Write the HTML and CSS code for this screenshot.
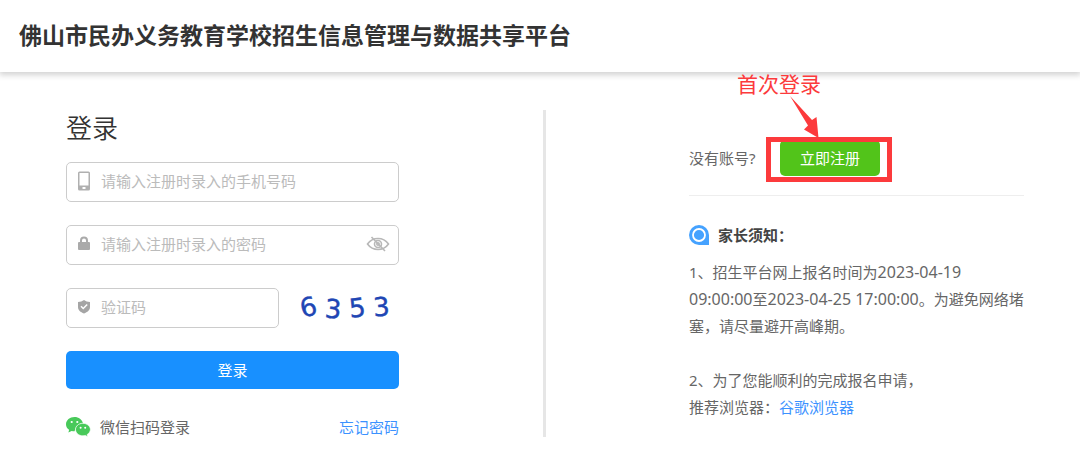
FILE: index.html
```html
<!DOCTYPE html>
<html lang="zh-CN">
<head>
<meta charset="utf-8">
<meta name="viewport" content="width=device-width, initial-scale=1">
<title>佛山市民办义务教育学校招生信息管理与数据共享平台</title>
<link rel="stylesheet" href="styles.css">
</head>
<body>
<header class="site-header">
  <h1 class="site-title">佛山市民办义务教育学校招生信息管理与数据共享平台</h1>
</header>
<main class="columns">
  <section class="login">
    <form class="login-form">
      <h2 class="login-title">登录</h2>
      <label class="field">
        <svg class="field-icon" viewBox="0 0 14 20" aria-hidden="true"><path fill="#b0b0b0" fill-rule="evenodd" d="M2.500 .5h9a1.500 1.500 0 0 1 1.500 1.500v16a1.500 1.500 0 0 1-1.500 1.500h-9A1.500 1.500 0 0 1 1 18V2A1.500 1.500 0 0 1 2.500.5zM2.500 2v12.500h9V2zM5.500 16v2h3v-2z"/></svg>
        <input class="field-input" type="tel" aria-label="手机号码" placeholder="请输入注册时录入的手机号码">
      </label>
      <label class="field">
        <svg class="field-icon" viewBox="0 0 14 20" aria-hidden="true"><rect x="1" y="8" width="12" height="8" rx="1" fill="#aaa"/><path d="M4 8.500V6.500a3 3 0 0 1 6 0v2" fill="none" stroke="#aaa" stroke-width="2"/></svg>
        <input class="field-input" type="password" aria-label="密码" placeholder="请输入注册时录入的密码">
        <button class="eye" type="button" aria-label="显示密码">
          <svg viewBox="0 0 24 16" width="24" height="16" fill="none" stroke="#b8b8b8" stroke-width="1.600"><path d="M1.500 8C4 4.500 7.500 2.500 12 2.500S20 4.500 22.500 8C20 11.500 16.500 13.500 12 13.500S4 11.500 1.500 8z"/><circle cx="12" cy="8" r="3.500"/><circle cx="12" cy="8" r="1.200"/><path d="M5.500 1L19 15"/></svg>
        </button>
      </label>
      <div class="code-row">
        <label class="field code-field">
          <svg class="field-icon" viewBox="0 0 14 20" aria-hidden="true"><path d="M7 3c1.700 1.300 3.500 1.800 6 2v5c0 3.200-2.500 5-6 6.500C3.500 15 1 13.200 1 10V5c2.500-.2 4.300-.7 6-2z" fill="#a5a5a5"/><path d="M4 9.300l2.200 2.200 4-4" fill="none" stroke="#fff" stroke-width="1.500"/></svg>
          <input class="field-input" type="text" aria-label="验证码" placeholder="验证码">
        </label>
        <svg class="captcha" viewBox="0 0 100 40" aria-label="6353">
          <text x="1" y="28" transform="rotate(-14 9 19)">6</text>
          <text x="26" y="30" transform="rotate(4 34 20)">3</text>
          <text x="50" y="29" transform="rotate(-6 58 20)">5</text>
          <text x="74" y="28" transform="rotate(-4 82 19)">3</text>
        </svg>
      </div>
      <button class="submit" type="submit">登录</button>
    </form>
    <div class="login-links">
      <a class="wechat" href="#">
        <svg class="wechat-icon" viewBox="0 0 25 20" aria-hidden="true"><path fill="#48c95a" d="M8.500 0C3.800 0 0 3.200 0 7.200c0 2.300 1.200 4.200 3.100 5.500L2.400 15.500l3.200-1.600c1 .3 1.900.4 3 .4C9 14 9 7 17 6.200 16.200 2.600 12.700 0 8.500 0z"/><path fill="#48c95a" stroke="#fff" stroke-width=".7" d="M16.800 6.300c-4.100 0-7.300 2.800-7.300 6.200s3.200 6.300 7.300 6.300c.9 0 1.700-.1 2.500-.4l2.600 1.400-.7-2.300c1.900-1.200 3.200-3 3.200-5 0-3.400-3.500-6.200-7.600-6.200z"/><g fill="#fff"><circle cx="5.700" cy="5" r="1.100"/><circle cx="11.300" cy="5" r="1.100"/><circle cx="14.600" cy="10.800" r="1"/><circle cx="19.200" cy="10.800" r="1"/></g></svg>
        <span>微信扫码登录</span>
      </a>
      <a class="link" href="#">忘记密码</a>
    </div>
  </section>
  <div class="divider"></div>
  <section class="side">
    <div class="register-row">
      <span class="register-hint">没有账号?</span>
      <div class="register-spot">
        <button class="register" type="button">立即注册</button>
        <div class="mark-frame"></div>
        <svg class="mark-arrow" viewBox="0 0 30 43" aria-hidden="true"><path fill="#fc3a3c" d="M0 0L22 24 26.500 21 28.500 42 14 33.500 18 29.500z"/></svg>
        <div class="mark-text">首次登录</div>
      </div>
    </div>
    <div class="notice">
      <h3 class="notice-title">
        <svg class="notice-icon" viewBox="0 0 20 20" aria-hidden="true"><path fill="#45a2ff" d="M10 0a10 10 0 0 1 10 10v10H10A10 10 0 0 1 10 0z"/><circle cx="10" cy="10" r="6" fill="#45a2ff" stroke="#fff" stroke-width="1.800"/></svg>
        <span>家长须知：</span>
      </h3>
      <p class="notice-text">1、招生平台网上报名时间为<time>2023-04-19<br>09:00:00</time>至<time>2023-04-25 17:00:00</time>。为避免网络堵<br>塞，请尽量避开高峰期。</p>
      <p class="notice-text">2、为了您能顺利的完成报名申请，<br>推荐浏览器：<a class="link" href="#">谷歌浏览器</a></p>
    </div>
  </section>
</main>
</body>
</html>
```
FILE: styles.css
```css
* {
  box-sizing: border-box;
}

body {
  margin: 0;
  background: #fff;
  color: #666;
  font: 15px/27px "Noto Sans", "Noto Sans CJK SC", sans-serif;
}

h1, h2, h3, p {
  margin: 0;
}

a {
  color: inherit;
  text-decoration: none;
}

button, input {
  font: inherit;
}

time {
  font-size: 16px;
  line-height: 20px;
}

.site-header {
  padding: 17px 19px 19px;
  box-shadow: 0 2px 6px 1px rgba(0, 0, 0, 0.18);
}

.site-title {
  color: #333;
  font-size: 23px;
  line-height: 36px;
}

.columns {
  display: grid;
  grid-template-columns: minmax(0, 543fr) 3px minmax(0, 534fr);
  padding: 38px 0 34px;
}

.login {
  padding: 0 144px 0 66px;
}

.login-form {
  display: flex;
  flex-direction: column;
  gap: 23px;
}

.login-title {
  margin-bottom: -7px;
  color: #333;
  font-size: 26px;
  font-weight: 350;
  line-height: 36px;
}

.field {
  display: flex;
  align-items: center;
  gap: 10px;
  height: 40px;
  padding: 0 8px 2px 10px;
  border: 1px solid #ccc;
  border-radius: 5px;
}

.field-icon {
  flex: none;
  width: 14px;
  height: 20px;
}

.field-input {
  flex: 1;
  min-width: 0;
  padding: 0;
  border: 0;
  outline: 0;
  background: none;
  color: #333;
}

.field-input::placeholder {
  color: #bbb;
  opacity: 1;
}

.eye {
  display: flex;
  padding: 0;
  border: 0;
  background: none;
}

.code-row {
  display: flex;
  gap: 20px;
}

.code-field {
  flex: 1;
  min-width: 0;
}

.captcha {
  flex: none;
  width: 100px;
  height: 40px;
  overflow: visible;
  fill: #2046b4;
  stroke: #2046b4;
  stroke-width: 0.4;
  font: 26px "DejaVu Sans", sans-serif;
}

.submit {
  height: 38px;
  padding: 0;
  border: 0;
  border-radius: 5px;
  background: #1890ff;
  color: #fff;
}

.login-links {
  display: flex;
  justify-content: space-between;
  margin-top: 28px;
  line-height: 20px;
}

.wechat {
  display: flex;
  gap: 9px;
}

.wechat-icon {
  width: 25px;
  height: 20px;
}

.link {
  color: #3c92ff;
}

.divider {
  background: #e6e6e6;
}

.side {
  padding: 30px 56px 0 143px;
}

.register-row {
  display: flex;
  align-items: center;
  padding-bottom: 19px;
  border-bottom: 1px solid #eee;
}

.register-hint {
  min-width: 91px;
}

.register-spot {
  position: relative;
}

.register {
  display: block;
  width: 100px;
  height: 36px;
  padding: 0;
  border: 0;
  border-radius: 5px;
  background: #52c41a;
  color: #fff;
}

.mark-frame {
  position: absolute;
  inset: -3px -12px -6px -14px;
  border: 5px solid #fc3a3c;
  pointer-events: none;
}

.mark-arrow {
  position: absolute;
  top: -44px;
  left: 10px;
  width: 30px;
  height: 43px;
}

.mark-text {
  position: absolute;
  top: -69px;
  left: -43px;
  color: #fc3a3c;
  font-size: 21px;
  white-space: nowrap;
}

.notice {
  padding-top: 27px;
}

.notice-title {
  display: flex;
  align-items: center;
  gap: 9px;
  margin-bottom: 12px;
  color: #444;
  font-size: 15px;
  line-height: 24px;
}

.notice-icon {
  width: 20px;
  height: 20px;
}

.notice-text + .notice-text {
  margin-top: 27px;
}
```
